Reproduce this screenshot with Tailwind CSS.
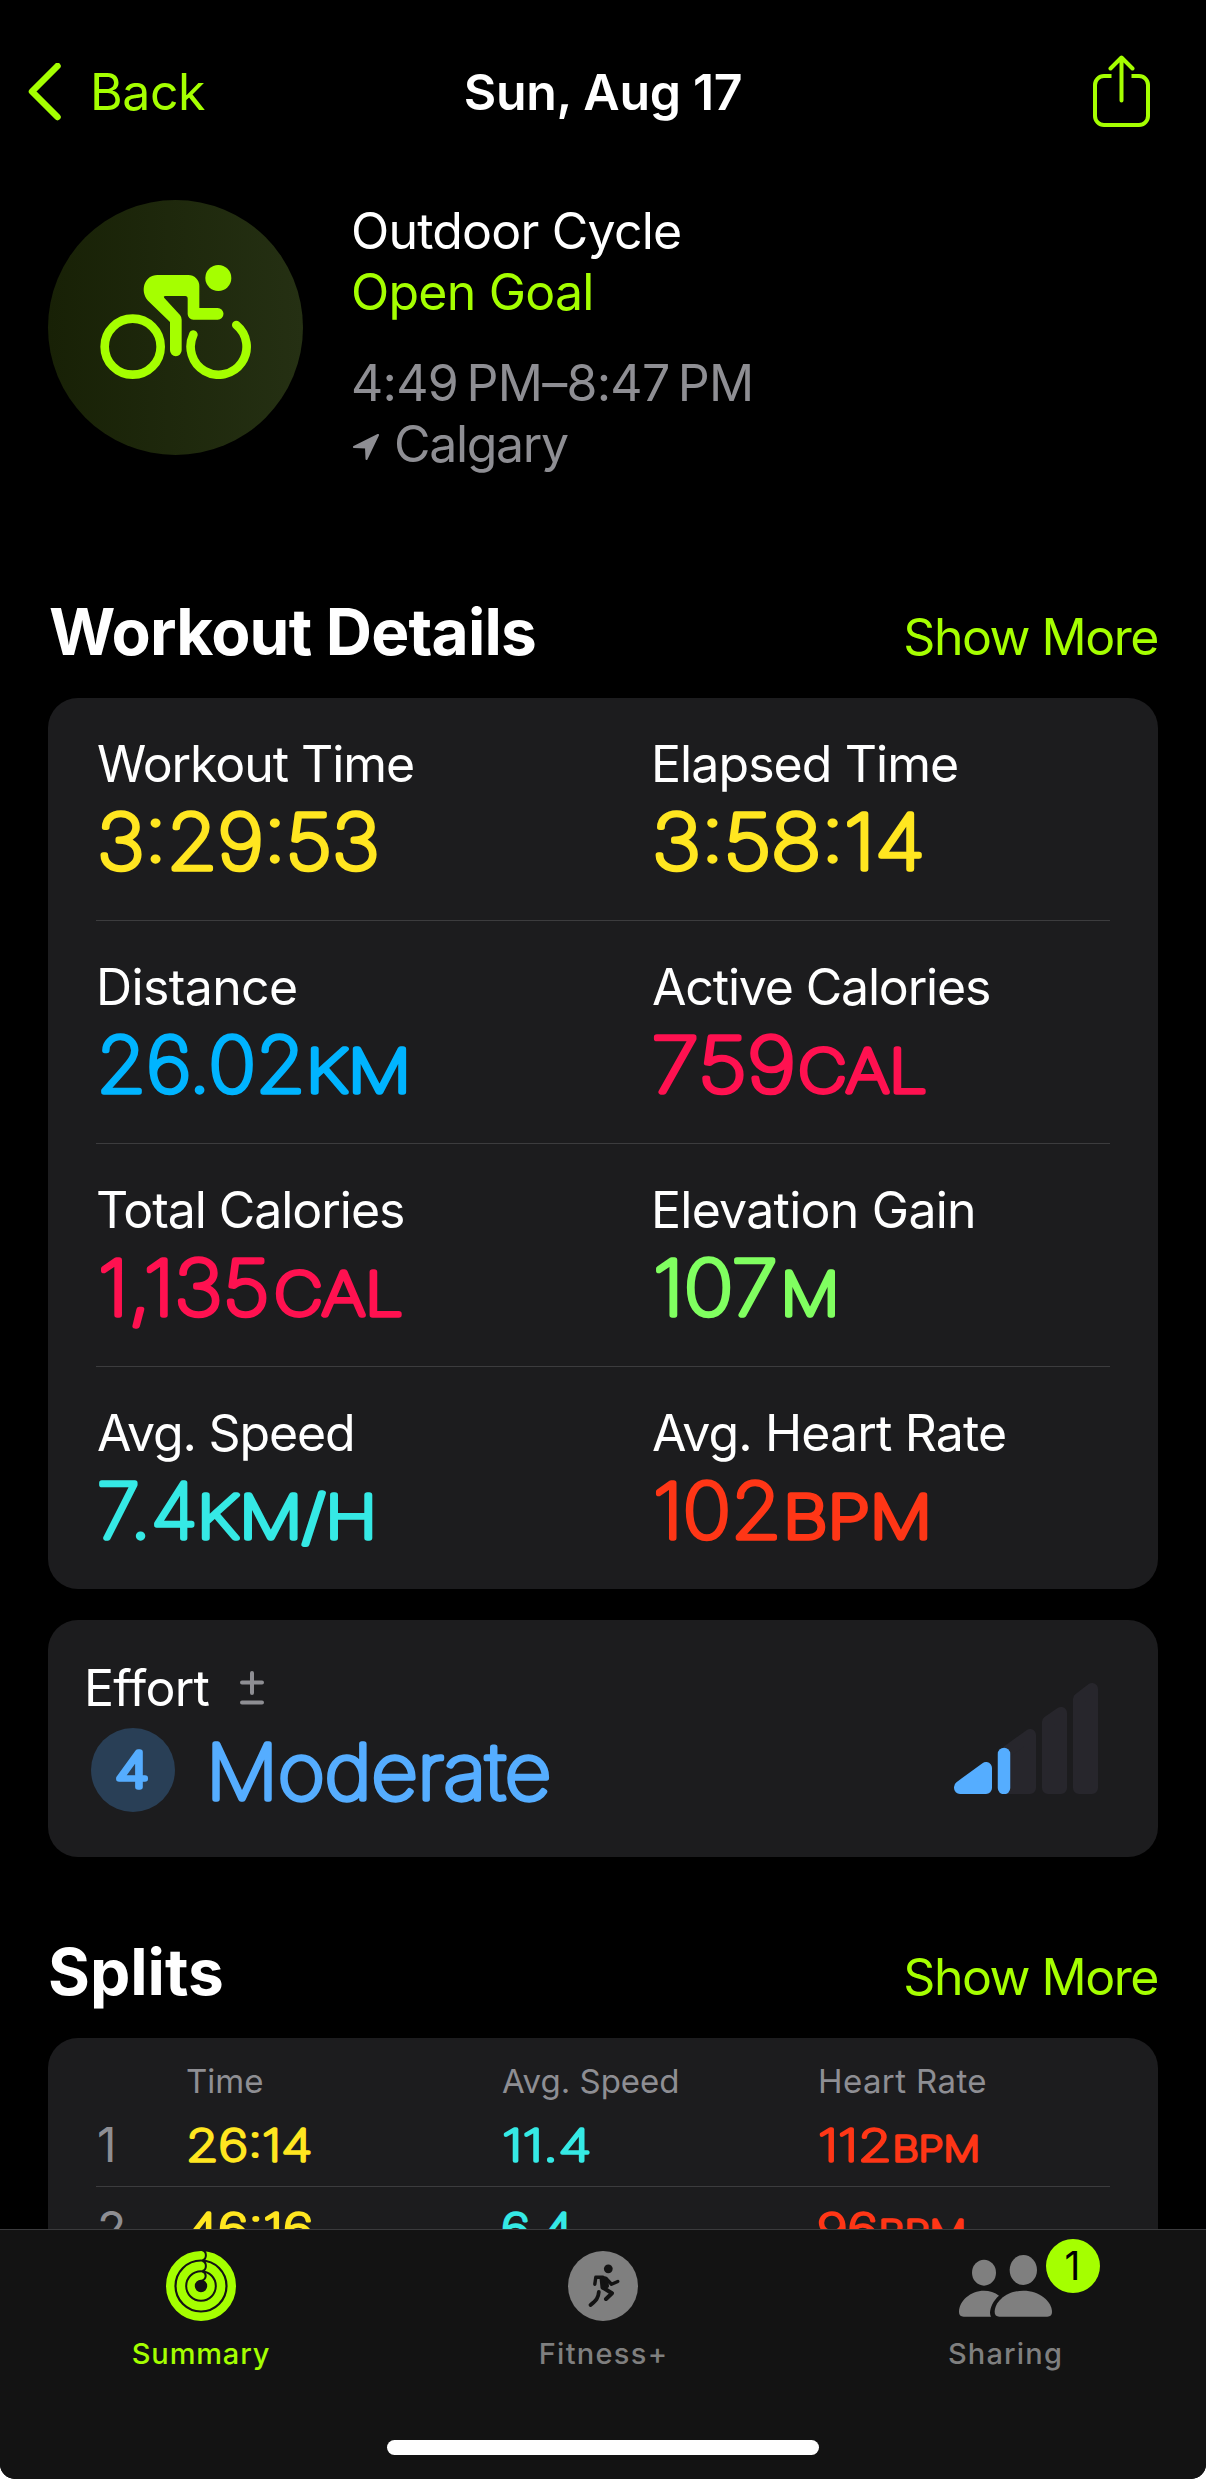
<!DOCTYPE html>
<html lang="en">
<head>
    <meta charset="UTF-8">
    <meta name="viewport" content="width=device-width, initial-scale=1.0">
    <title>Outdoor Cycle - Workout Summary</title>
    <script src="https://cdn.jsdelivr.net/npm/@tailwindcss/browser@4"></script>
    <style>
        /* thin text with a round outline, for soft stroke ends */
        .rounded-text {
            font-weight: 100;
            fill: currentColor;
            stroke: currentColor;
            stroke-width: 5.3px;
            stroke-linejoin: round;
            stroke-linecap: round;
        }
        .rounded-text.small {
            stroke-width: 3.4px;
        }
    </style>
</head>
<body class="bg-white font-['Inter',sans-serif] text-white text-[50px] leading-[60px]">
<div class="w-[1206px] h-[2479px] bg-black rounded-b-[15px] overflow-hidden flex flex-col">

    <main class="flex-1 min-h-0 overflow-hidden">
        <!-- Nav bar -->
        <header class="h-[184px] grid grid-cols-[1fr_auto_1fr] items-center px-7">
            <a class="flex items-center gap-[29px] text-[#a5ff00]">
                <svg class="w-[33px] h-[58px]" viewBox="0 0 33 58" fill="none" stroke="currentColor" stroke-width="6.500" stroke-linecap="round" stroke-linejoin="round">
                    <path d="M29.5 3L4 28.500l25.5 25.500" />
                </svg>
                <span class="tracking-[-0.45px]">Back</span>
            </a>
            <h1 class="font-semibold tracking-[-0.33px]">Sun, Aug 17</h1>
            <svg class="justify-self-end mr-7 mb-[2px] w-[57px] h-[73px] text-[#a5ff00]" viewBox="0 0 57 73" fill="none" stroke="currentColor" stroke-width="4" stroke-linecap="round" stroke-linejoin="round">
                <path d="M18.500 21H11a9 9 0 0 0-9 9v31a9 9 0 0 0 9 9h35a9 9 0 0 0 9-9V30a9 9 0 0 0-9-9h-7.500" stroke-linecap="butt" />
                <path d="M28.500 45.500V3M17.500 13.500L28.500 2.500l11 11" />
            </svg>
        </header>

        <!-- Workout summary -->
        <section class="mt-4 mx-12 flex gap-12 h-[274px] leading-[61px]">
            <div class="size-[255px] shrink-0 rounded-full bg-linear-to-r from-[#182106] to-[#253013] flex items-center justify-center">
                <svg class="w-[151px] h-[114px] mb-[11px] text-[#a5ff00]" viewBox="60 75 453 342" fill="currentColor">
                    <circle cx="415" cy="114" r="39" />
                    <path d="M232 105H325a33 33 0 0 1 33 33V204H413a17.500 17.500 0 0 1 0 35H340a17 17 0 0 1-17-17V176q0-8-7-8H256q-7 0-3 6L300 225q5 6 5 14V331a17.500 17.500 0 0 1-35 0V246L204 182C178 152 194 105 232 105Z" />
                    <g fill="none" stroke="currentColor" stroke-width="26" stroke-linecap="round">
                        <circle cx="158" cy="320" r="84" />
                        <path d="M340 284A84 84 0 1 0 469 255" />
                    </g>
                </svg>
            </div>
            <div class="pt-px">
                <p class="tracking-[-0.79px]">Outdoor Cycle</p>
                <p class="tracking-[-0.78px] text-[#a5ff00]">Open Goal</p>
                <p class="mt-[30px] tracking-[-0.72px] text-[#8e8e93]">4:49&#8201;PM–8:47&#8201;PM</p>
                <p class="flex items-center gap-[15px] pl-[2px] tracking-[-1.34px] text-[#8e8e93]">
                    <svg class="w-[26px] h-[26px] mt-1" viewBox="0 0 26 26" fill="currentColor" stroke="currentColor" stroke-width="2" stroke-linejoin="round">
                        <path d="M25 1L1 13l12 .5.5 11.500Z" />
                    </svg>
                    <span>Calgary</span>
                </p>
            </div>
        </section>

        <!-- Workout details -->
        <div class="mt-[118px] mx-12 h-[80px] flex items-baseline justify-between leading-[80px]">
            <h2 class="pl-px text-[64px] font-bold tracking-[-0.77px]">Workout Details</h2>
            <a class="tracking-[-1.48px] text-[#a5ff00]">Show More</a>
        </div>
        <section class="mt-[26px] mx-12 px-12 h-[891px] rounded-[30px] bg-[#1c1c1e] divide-y divide-[#3c3c3e]">
            <div class="grid grid-cols-[555px_1fr] h-[223px] pt-9">
                <div>
                    <p class="pl-px tracking-[-1.07px]">Workout Time</p>
                    <svg class="w-full h-[90px] overflow-visible text-[#ffe620]">
                        <text class="rounded-text text-[76px]" x="1" y="75.200" textLength="282.500" lengthAdjust="spacingAndGlyphs">3:29:53</text>
                    </svg>
                </div>
                <div>
                    <p class="tracking-[-0.93px]">Elapsed Time</p>
                    <svg class="w-full h-[90px] overflow-visible text-[#ffe620]">
                        <text class="rounded-text text-[76px]" x="1" y="75.200" textLength="273" lengthAdjust="spacingAndGlyphs">3:58:14</text>
                    </svg>
                </div>
            </div>
            <div class="grid grid-cols-[555px_1fr] h-[223px] pt-9">
                <div>
                    <p class="tracking-[-0.62px]">Distance</p>
                    <svg class="w-full h-[90px] overflow-visible text-[#00b4ff]">
                        <text class="rounded-text text-[76px]" x="0.500" y="75.200" textLength="209" lengthAdjust="spacingAndGlyphs">26.02</text>
                        <text class="rounded-text text-[59px]" x="210" y="75.200" textLength="105" lengthAdjust="spacingAndGlyphs">KM</text>
                    </svg>
                </div>
                <div>
                    <p class="pl-px tracking-[-1.17px]">Active Calories</p>
                    <svg class="w-full h-[90px] overflow-visible text-[#ff1150]">
                        <text class="rounded-text text-[76px]" x="0.500" y="75.200" textLength="144.300" lengthAdjust="spacingAndGlyphs">759</text>
                        <text class="rounded-text text-[59px]" x="147" y="75.200" textLength="129" lengthAdjust="spacingAndGlyphs">CAL</text>
                    </svg>
                </div>
            </div>
            <div class="grid grid-cols-[555px_1fr] h-[223px] pt-9">
                <div>
                    <p class="tracking-[-1.06px]">Total Calories</p>
                    <svg class="w-full h-[90px] overflow-visible text-[#ff1150]">
                        <text class="rounded-text text-[76px]" x="2" y="75.200" textLength="171.500" lengthAdjust="spacingAndGlyphs">1,135</text>
                        <text class="rounded-text text-[59px]" x="178" y="75.200" textLength="129" lengthAdjust="spacingAndGlyphs">CAL</text>
                    </svg>
                </div>
                <div>
                    <p class="tracking-[-0.75px]">Elevation Gain</p>
                    <svg class="w-full h-[90px] overflow-visible text-[#80ff60]">
                        <text class="rounded-text text-[76px]" x="2" y="75.200" textLength="124.700" lengthAdjust="spacingAndGlyphs">107</text>
                        <text class="rounded-text text-[59px]" x="129.500" y="75.200" textLength="59" lengthAdjust="spacingAndGlyphs">M</text>
                    </svg>
                </div>
            </div>
            <div class="grid grid-cols-[555px_1fr] h-[222px] pt-9">
                <div>
                    <p class="pl-px tracking-[-1.15px]">Avg. Speed</p>
                    <svg class="w-full h-[90px] overflow-visible text-[#35e9e5]">
                        <text class="rounded-text text-[76px]" x="1" y="75.200" textLength="100.500" lengthAdjust="spacingAndGlyphs">7.4</text>
                        <text class="rounded-text text-[59px]" x="101" y="75.200" textLength="180" lengthAdjust="spacingAndGlyphs">KM/H</text>
                    </svg>
                </div>
                <div>
                    <p class="pl-px tracking-[-0.87px]">Avg. Heart Rate</p>
                    <svg class="w-full h-[90px] overflow-visible text-[#ff3616]">
                        <text class="rounded-text text-[76px]" x="2" y="75.200" textLength="128.400" lengthAdjust="spacingAndGlyphs">102</text>
                        <text class="rounded-text text-[59px]" x="132" y="75.200" textLength="149" lengthAdjust="spacingAndGlyphs">BPM</text>
                    </svg>
                </div>
            </div>
        </section>

        <!-- Effort -->
        <section class="mt-[31px] mx-12 h-[237px] rounded-[30px] bg-[#1c1c1e] flex items-start justify-between pl-9 pr-[59px]">
            <div class="pt-[38px]">
                <div class="flex items-center gap-[31px]">
                    <span class="tracking-[-0.75px]">Effort</span>
                    <svg class="w-6 h-[34px]" viewBox="0 0 24 34" fill="none" stroke="#8e8e93" stroke-width="4" stroke-linecap="round">
                        <path d="M2 11.500h20M12 2v20M2 31.500h20" />
                    </svg>
                </div>
                <div class="mt-[10px] ml-[7px] flex items-center gap-[32px]">
                    <div class="size-[84px] rounded-full bg-[#293f56] text-[#55adff]">
                        <svg class="size-full">
                            <text class="rounded-text text-[48px]" x="24" y="59" textLength="34" lengthAdjust="spacingAndGlyphs">4</text>
                        </svg>
                    </div>
                    <svg class="w-[350px] h-[84px] overflow-visible text-[#55adff]">
                        <text class="rounded-text text-[76px]" x="-1" y="70.500" textLength="345" lengthAdjust="spacingAndGlyphs">Moderate</text>
                    </svg>
                </div>
            </div>
            <svg class="mt-[62px] w-[145px] h-[112px]" viewBox="0 0 145 112" stroke-width="12" stroke-linejoin="round">
                <g fill="#27262c" stroke="#27262c">
                    <path d="M51 71L76 53V106H51Z" />
                    <path d="M94 40L107 31V106H94Z" />
                    <path d="M125 17L138 7V106H125Z" />
                </g>
                <rect x="41" y="62" width="9" height="50" fill="#1c1c1e" />
                <g fill="#55adff" stroke="#55adff">
                    <path d="M6 106V105L32 86V106Z" />
                    <path d="M50 72V106" stroke-width="12.500" stroke-linecap="round" />
                </g>
            </svg>
        </section>

        <!-- Splits -->
        <div class="mt-[75px] mx-12 h-[80px] flex items-baseline justify-between leading-[80px]">
            <h2 class="text-[64px] font-bold">Splits</h2>
            <a class="tracking-[-1.48px] text-[#a5ff00]">Show More</a>
        </div>
        <section class="mt-[26px] mx-12 px-12 pt-[23px] rounded-t-[30px] bg-[#1c1c1e] text-[#8e8e93]">
            <div class="grid grid-cols-[90px_316px_316px_1fr] h-[42px] text-[33px] leading-[40px]">
                <span></span>
                <span>Time</span>
                <span>Avg. Speed</span>
                <span class="tracking-[0.4px]">Heart Rate</span>
            </div>
            <div class="grid grid-cols-[90px_316px_316px_1fr] h-[84px] border-b border-[#3c3c3e]">
                <span class="pl-px pt-3 text-[48px]">1</span>
                <svg class="w-full h-full overflow-visible text-[#ffe620]">
                    <text class="rounded-text small text-[44px]" x="0" y="57.500" textLength="126.400" lengthAdjust="spacingAndGlyphs">26:14</text>
                </svg>
                <svg class="w-full h-full overflow-visible text-[#35e9e5]">
                    <text class="rounded-text small text-[44px]" x="0" y="57.500" textLength="89.400" lengthAdjust="spacingAndGlyphs">11.4</text>
                </svg>
                <svg class="w-full h-full overflow-visible text-[#ff3616]">
                    <text class="rounded-text small text-[44px]" x="0" y="57.500" textLength="73.900" lengthAdjust="spacingAndGlyphs">112</text>
                    <text class="rounded-text small text-[34px]" x="74.500" y="57.500" textLength="87.400" lengthAdjust="spacingAndGlyphs">BPM</text>
                </svg>
            </div>
            <div class="grid grid-cols-[90px_316px_316px_1fr] h-[84px]">
                <span class="pl-px pt-3 text-[48px]">2</span>
                <svg class="w-full h-full overflow-visible text-[#ffe620]">
                    <text class="rounded-text small text-[44px]" x="0" y="57.500" textLength="127.500" lengthAdjust="spacingAndGlyphs">46:16</text>
                </svg>
                <svg class="w-full h-full overflow-visible text-[#35e9e5]">
                    <text class="rounded-text small text-[44px]" x="-1" y="57.500" textLength="72" lengthAdjust="spacingAndGlyphs">6.4</text>
                </svg>
                <svg class="w-full h-full overflow-visible text-[#ff3616]">
                    <text class="rounded-text small text-[44px]" x="-1" y="57.500" textLength="61" lengthAdjust="spacingAndGlyphs">96</text>
                    <text class="rounded-text small text-[34px]" x="60.500" y="57.500" textLength="87.400" lengthAdjust="spacingAndGlyphs">BPM</text>
                </svg>
            </div>
        </section>
    </main>

    <!-- Tab bar -->
    <nav class="shrink-0 h-[250px] border-t border-[#3a3a3c] bg-[#131313] text-[29px] leading-[40px] font-medium text-[#7f7f7f]">
        <div class="grid grid-cols-3 pt-[21px]">
            <a class="flex flex-col items-center gap-[13px] text-[#a5ff00]">
                <svg class="size-[70px]" viewBox="0 0 70 70" fill="none">
                    <g stroke="currentColor">
                        <circle cx="35" cy="35" r="30.800" stroke-width="8.400" />
                        <circle cx="35" cy="35" r="20.100" stroke-width="8.600" />
                        <circle cx="35" cy="35" r="10" stroke-width="7.600" />
                    </g>
                    <g stroke="#131313" stroke-width="2">
                        <path d="M36.500 -.8C41 .5 41 8 36.500 9.300" />
                        <path d="M36.500 10C41 11.300 41 18.500 36.500 20" />
                        <path d="M36.500 20.500C40.800 22 41 28 35.500 30" />
                    </g>
                </svg>
                <span class="tracking-[0.86px]">Summary</span>
            </a>
            <a class="flex flex-col items-center gap-[13px]">
                <svg class="size-[70px]" viewBox="0 0 70 70" fill="none">
                    <circle cx="35" cy="35" r="35" fill="currentColor" />
                    <circle cx="40.300" cy="17.800" r="4.400" fill="#131313" />
                    <g stroke="#131313" stroke-width="3.400" stroke-linecap="round" stroke-linejoin="round">
                        <path d="M26.800 33.300L27.800 26.200H35" />
                        <path d="M38 27.500L43.500 33.200L49.800 30.500" />
                        <path d="M35.500 37L44 42.200L38 48" stroke-width="4" />
                        <path d="M30.800 41C30.500 47 28 49.500 22.500 54" stroke-width="3.800" />
                        <path d="M33.500 27L37.500 27.500L39 35L34.500 36.500Z" fill="#131313" stroke-width="4" />
                    </g>
                </svg>
                <span class="pl-px tracking-[1.29px]">Fitness+</span>
            </a>
            <a class="flex flex-col items-center gap-[13px]">
                <div class="relative h-[70px] flex items-center">
                    <svg class="w-[93px] h-[62px]" viewBox="174 105 279 186" fill="currentColor">
                        <ellipse cx="249" cy="158" rx="36" ry="39" />
                        <ellipse cx="367" cy="150" rx="41" ry="45" />
                        <path d="M188 290Q174 290 174 276C174 243 208 212 249 212C265 212 282 217 294 227C277 241 268 262 267 278Q267 284 270 290Z" />
                        <path d="M295 290Q281 290 281 276C281 244 318 212 367 212S453 244 453 276Q453 290 439 290Z" />
                    </svg>
                    <span class="absolute left-[87px] -top-[12px] size-[54px] rounded-full bg-[#a5ff00] text-black text-[39px] leading-[54px] font-normal text-center">1</span>
                </div>
                <span class="pl-px tracking-[1.17px]">Sharing</span>
            </a>
        </div>
        <!-- Home indicator -->
        <div class="mt-[66px] mx-auto w-[432px] h-[15px] rounded-full bg-white"></div>
    </nav>
</div>
</body>
</html>
